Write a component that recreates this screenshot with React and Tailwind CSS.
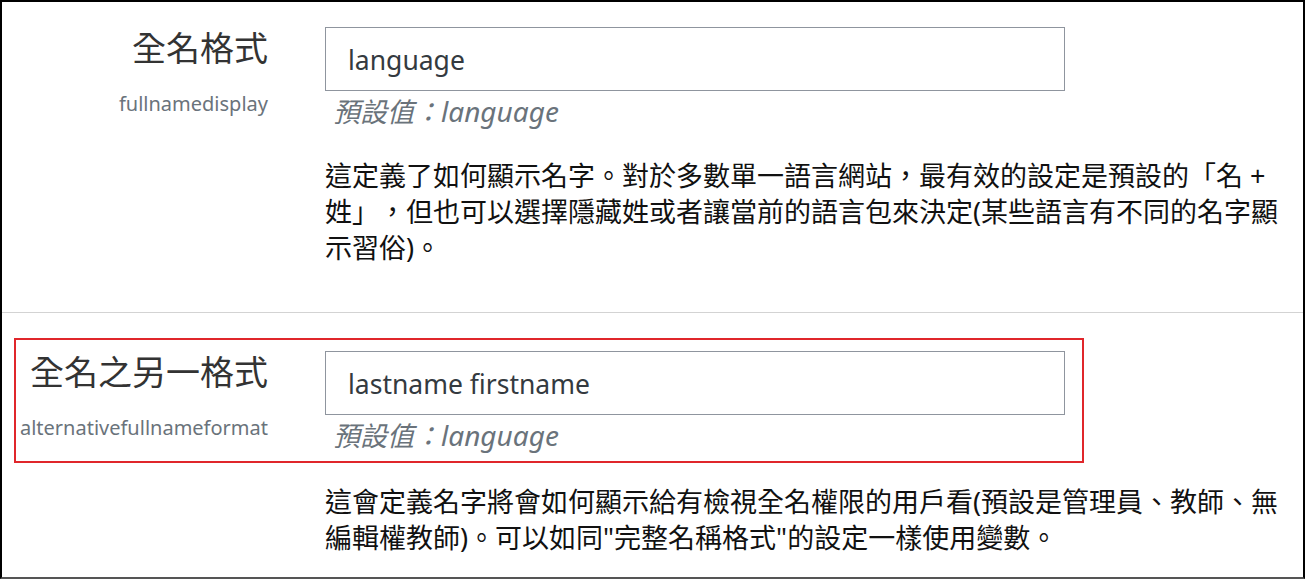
import React from 'react';

const FONT = "font-['Noto_Sans','Noto_Sans_CJK_TC',sans-serif]";

function SettingRow({ label, name, value, defaultValue }) {
  return (
    <div className="flex">
      <div className="w-[252px] shrink-0 text-right">
        <div className="pt-[1px] text-[34px] leading-[40px] text-[#333]">{label}</div>
        <div className="mt-[23px] text-[20px] leading-[26px] text-[#6a737b]">{name}</div>
      </div>
      <div className="ml-[57px]">
        <div className="w-[740px] h-[64px] border border-[#8f959e] bg-white pl-[22px] pt-[4px] flex items-center text-[26.5px] text-[#343a40]">
          {value}
        </div>
        <div className="pl-[8px] pt-[3px] italic text-[27px] leading-[34px] text-[#6a737b]">
          預設值：<span className="text-[28px]">{defaultValue}</span>
        </div>
      </div>
    </div>
  );
}

function Description({ children }) {
  return (
    <p className="w-[965px] text-[27px] leading-[36px] text-[#111]">{children}</p>
  );
}

export default function App() {
  return (
    <div className={`w-[1305px] h-[579px] bg-white border-2 border-black border-b-[#555] overflow-hidden [text-spacing-trim:space-all] ${FONT}`}>
      {/* fullnamedisplay */}
      <section className="h-[311px] border-b border-[#d3d3d3] pt-[25px] pl-[14px]">
        <SettingRow
          label="全名格式"
          name="fullnamedisplay"
          value="language"
          defaultValue="language"
        />
        <div className="ml-[309px] mt-[29px]">
          <Description>
            這定義了如何顯示名字。對於多數單一語言網站，最有效的設定是預設的「名 + 姓」，但也可以選擇隱藏姓或者讓當前的語言包來決定(某些語言有不同的名字顯示習俗)。
          </Description>
        </div>
      </section>

      {/* alternativefullnameformat, highlighted */}
      <section className="pt-[25px] pl-[12px]">
        <div className="w-[1070px] h-[125px] border-2 border-[#e0262b] pt-[11px]">
          <SettingRow
            label="全名之另一格式"
            name="alternativefullnameformat"
            value="lastname firstname"
            defaultValue="language"
          />
        </div>
        <div className="ml-[311px] mt-[21px]">
          <Description>
            這會定義名字將會如何顯示給有檢視全名權限的用戶看(預設是管理員、教師、無編輯權教師)。可以如同"完整名稱格式"的設定一樣使用變數。
          </Description>
        </div>
      </section>
    </div>
  );
}
